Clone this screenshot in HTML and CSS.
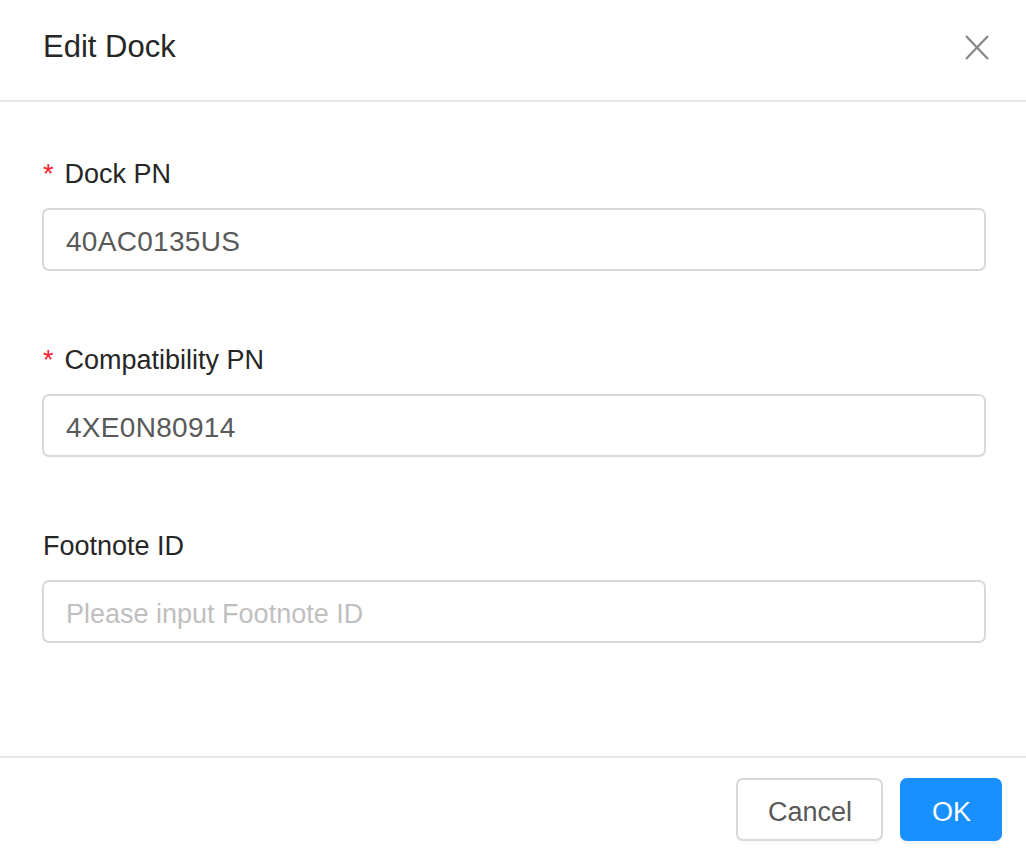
FILE: index.html
```html
<!DOCTYPE html>
<html lang="en">
<head>
<meta charset="utf-8">
<title>Edit Dock</title>
<link rel="stylesheet" href="styles.css">
</head>
<body>
<div class="modal">
  <div class="modal-header">
    <div class="modal-title">Edit Dock</div>
    <button class="modal-close" type="button" aria-label="Close">
      <svg width="24" height="25" viewBox="0 0 24 25" fill="none" stroke="currentColor" stroke-width="2.3" stroke-linecap="butt">
        <line x1="1" y1="1" x2="23" y2="24"/>
        <line x1="23" y1="1" x2="1" y2="24"/>
      </svg>
    </button>
  </div>
  <div class="modal-body">
    <div class="form-item">
      <label class="form-label"><span class="req">*</span>Dock PN</label>
      <input class="form-input" type="text" value="40AC0135US">
    </div>
    <div class="form-item">
      <label class="form-label"><span class="req">*</span>Compatibility PN</label>
      <input class="form-input" type="text" value="4XE0N80914">
    </div>
    <div class="form-item">
      <label class="form-label">Footnote ID</label>
      <input class="form-input" type="text" placeholder="Please input Footnote ID">
    </div>
  </div>
  <div class="modal-footer">
    <button class="btn btn-default" type="button">Cancel</button>
    <button class="btn btn-primary" type="button">OK</button>
  </div>
</div>
</body>
</html>
```

FILE: styles.css
```css
* { box-sizing: border-box; }

html, body {
  margin: 0;
  padding: 0;
  background: #ffffff;
}

body {
  font-family: "Liberation Sans", Arial, Helvetica, sans-serif;
  color: #262626;
}

.modal {
  width: 1026px;
  height: 862px;
  background: #ffffff;
  display: flex;
  flex-direction: column;
}

.modal-header {
  height: 102px;
  padding: 0 37px 0 43px;
  border-bottom: 2px solid #e8e8e8;
  display: flex;
  align-items: center;
  justify-content: space-between;
}

.modal-title {
  font-size: 31px;
  line-height: 38px;
  padding-bottom: 6px;
  color: #262626;
}

.modal-close {
  border: 0;
  background: transparent;
  padding: 0;
  margin: 0 0 6px 0;
  width: 24px;
  height: 25px;
  color: #888888;
  display: flex;
  cursor: pointer;
}

.modal-body {
  flex: 0 0 654px;
  padding: 52.5px 40px 0 42px;
  display: flex;
  flex-direction: column;
  gap: 69.5px;
}

.form-item {
  display: flex;
  flex-direction: column;
  gap: 15.5px;
}

.form-label {
  font-size: 27px;
  line-height: 38px;
  color: #262626;
  padding-left: 1px;
}

.req {
  color: #f5222d;
  margin-right: 11px;
}

.form-input {
  width: 944px;
  height: 63px;
  border: 2px solid #d9d9d9;
  border-radius: 7px;
  padding: 5px 20px 0 22px;
  font-family: "Liberation Sans", Arial, Helvetica, sans-serif;
  font-size: 28px;
  letter-spacing: 0.3px;
  color: #595959;
  background: #ffffff;
  outline: none;
}

.form-input::placeholder {
  color: #bfbfbf;
  font-size: 27px;
  letter-spacing: 0;
  opacity: 1;
}

.modal-footer {
  flex: 1;
  border-top: 2px solid #e8e8e8;
  padding: 20px 24px 0 0;
  display: flex;
  justify-content: flex-end;
  align-items: flex-start;
  gap: 17px;
}

.btn {
  height: 63px;
  border-radius: 7px;
  font-family: "Liberation Sans", Arial, Helvetica, sans-serif;
  font-size: 27px;
  padding: 5px 30px 0;
  line-height: 1;
  cursor: pointer;
}

.btn-default {
  width: 147px;
  background: #ffffff;
  border: 2px solid #d9d9d9;
  color: #595959;
  box-shadow: 0 3px 0 rgba(0, 0, 0, 0.025);
}

.btn-primary {
  width: 102px;
  background: #1890ff;
  border: 2px solid #1890ff;
  color: #ffffff;
  box-shadow: 0 3px 0 rgba(0, 0, 0, 0.045);
}
```
